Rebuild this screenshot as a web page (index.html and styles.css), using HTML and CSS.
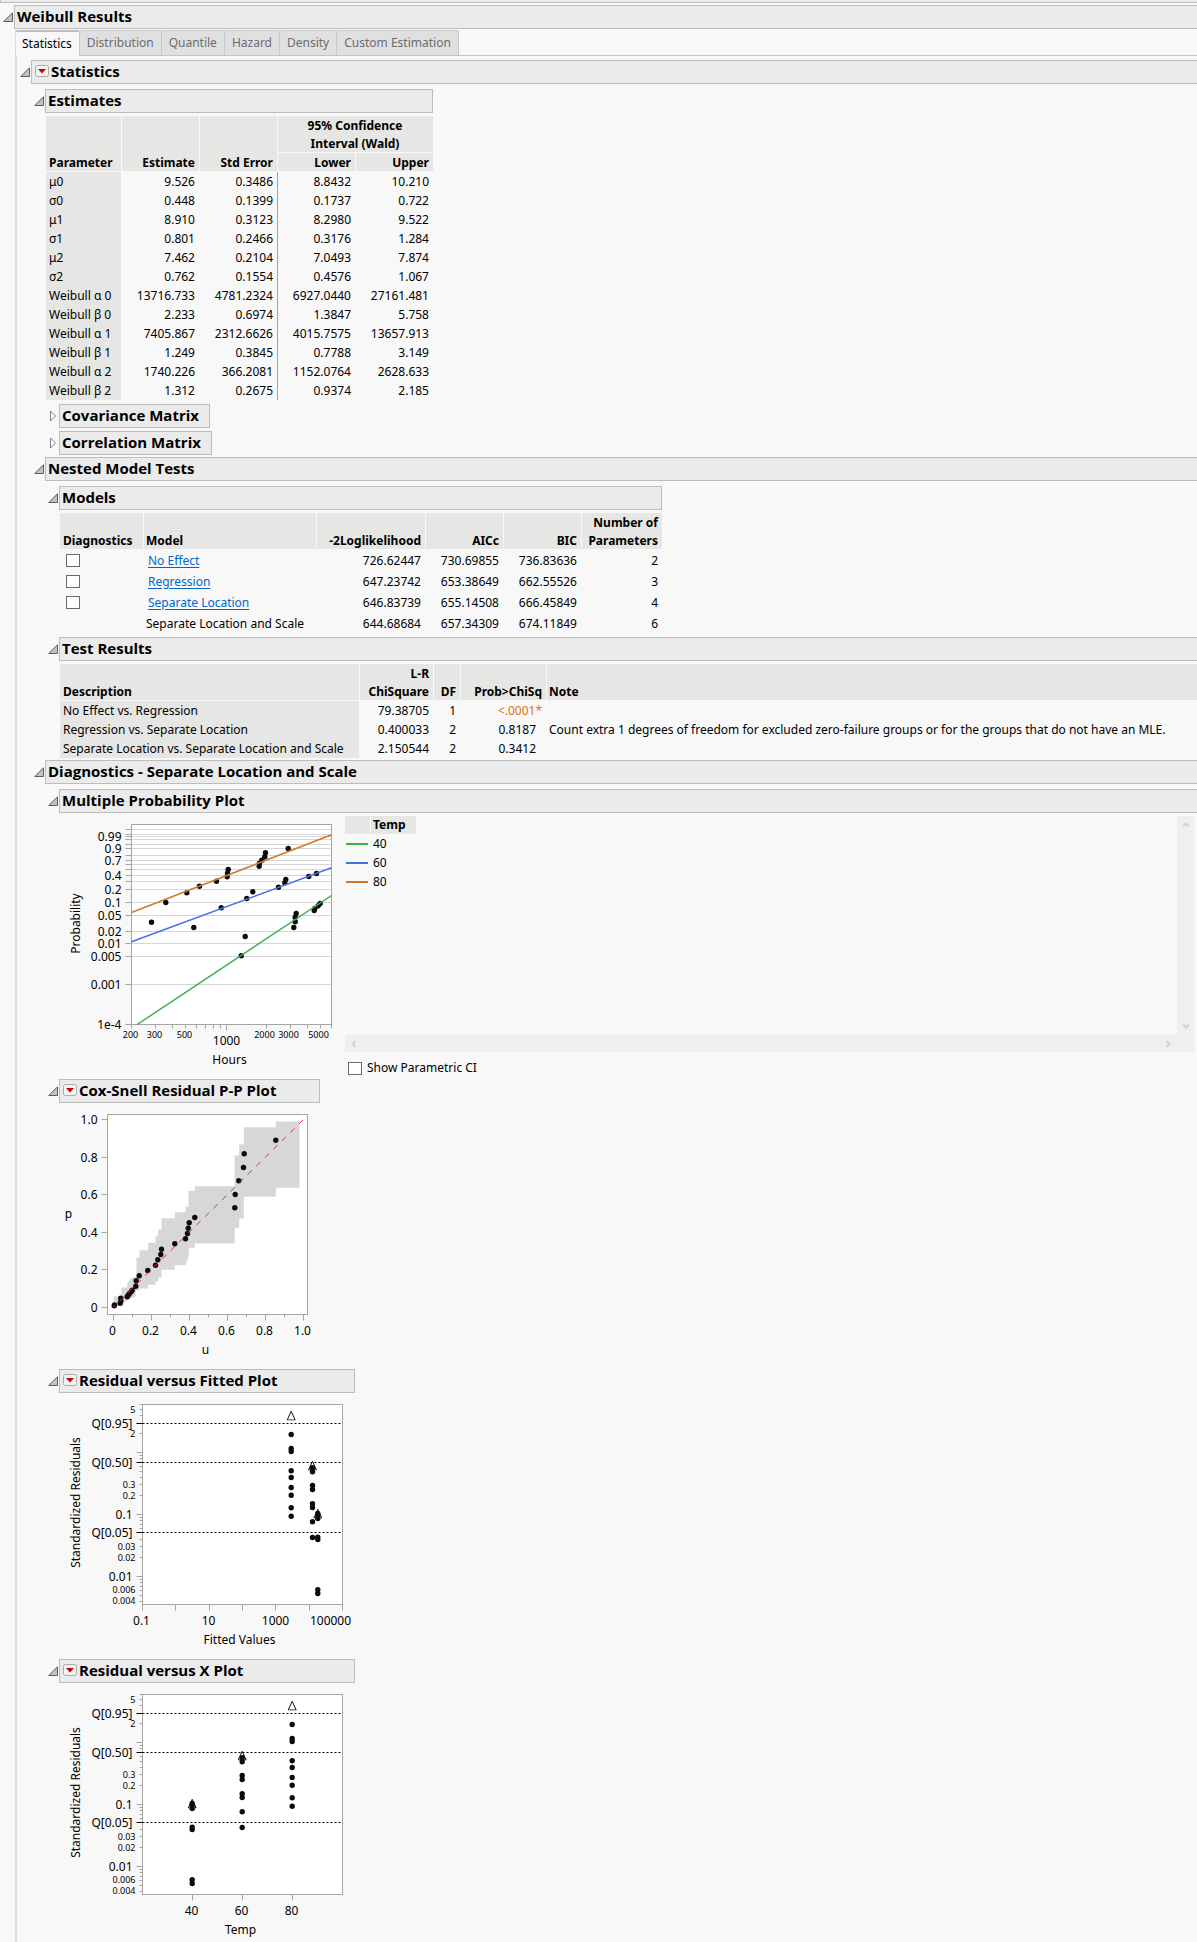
FILE: index.html
```html
<!DOCTYPE html>
<html lang="en">
<head>
<meta charset="utf-8">
<title>Weibull Results</title>
<link rel="stylesheet" href="styles.css">
</head>
<body>
<svg class="defs" aria-hidden="true">
  <defs>
    <symbol id="open" viewBox="0 0 10 10"><path d="M.8 9.5H9.5V.8Z" fill="#c2c2c2" stroke="#5c5c5c"/></symbol>
    <symbol id="closed" viewBox="0 0 10 12"><path d="M2.5 1V11L7.5 6Z" fill="#fff" stroke="#808080"/></symbol>
    <symbol id="menu" viewBox="0 0 14 12"><rect x=".5" y=".5" width="13" height="11" rx="2" fill="#f3f3f3" stroke="#ababab"/><path d="M3 4H11L7 8.5Z" fill="#cc0000"/></symbol>
    <symbol id="triangle" viewBox="0 0 10 10"><path d="M5 .8L9 9.5H1Z" fill="none" stroke="#111"/></symbol>
    <g id="residual-axis">
      <path class="axis" d="M-6 48H0M-6 110H0M-6 172H0M-3 0H0M-3 5H0M-3 11H0M-3 29H0M-3 51H0M-3 54H0M-3 62H0M-3 67H0M-3 73H0M-3 80H0M-3 91H0M-3 113H0M-3 116H0M-3 120H0M-3 124H0M-3 135H0M-3 142H0M-3 153H0M-3 175H0M-3 178H0M-3 182H0M-3 186H0M-3 191H0M-3 197H0"/>
      <rect class="frame" width="200" height="200"/>
      <path class="quantile-tick" d="M-6 19H0M-6 58H0M-6 128H0"/>
      <path class="quantile" d="M0 19H198M0 58H198M0 128H198"/>
      <g class="end small">
        <text x="-7" y="8">5</text><text x="-7" y="32">2</text><text x="-7" y="83">0.3</text><text x="-7" y="94">0.2</text><text x="-7" y="145">0.03</text><text x="-7" y="156">0.02</text><text x="-7" y="188">0.006</text><text x="-7" y="199">0.004</text>
      </g>
      <g class="end">
        <text x="-10" y="23">Q[0.95]</text><text x="-10" y="62">Q[0.50]</text><text x="-10" y="114">0.1</text><text x="-10" y="132">Q[0.05]</text><text x="-10" y="176">0.01</text>
      </g>
      <text class="mid" transform="translate(-63 98) rotate(-90)">Standardized Residuals</text>
    </g>
  </defs>
</svg>
<div class="previous"></div>
<main class="section">
  <div class="head"><button class="toggle" aria-label="Collapse"><svg width="10" height="10"><use href="#open"/></svg></button><h1 class="bar">Weibull Results</h1></div>
  <div class="panel">
    <div class="tabs" role="tablist">
      <button class="tab active" role="tab" aria-selected="true">Statistics</button><button class="tab" role="tab">Distribution</button><button class="tab" role="tab">Quantile</button><button class="tab" role="tab">Hazard</button><button class="tab" role="tab">Density</button><button class="tab" role="tab">Custom Estimation</button>
    </div>
    <section class="tabpanel">
      <div class="head"><button class="toggle" aria-label="Collapse"><svg width="10" height="10"><use href="#open"/></svg></button><h2 class="bar"><button class="menu" aria-label="Options"><svg width="14" height="12"><use href="#menu"/></svg></button>Statistics</h2></div>
      <div class="nest">
        <section class="fit">
          <div class="head"><button class="toggle" aria-label="Collapse"><svg width="10" height="10"><use href="#open"/></svg></button><h3 class="bar closed-end">Estimates</h3></div>
          <table class="data estimates">
            <colgroup><col class="w76"><col class="w78"><col class="w78"><col class="w78"><col class="w77"></colgroup>
            <thead>
              <tr><th class="left" rowspan="2">Parameter</th><th rowspan="2">Estimate</th><th rowspan="2">Std Error</th><th class="center" colspan="2">95% Confidence<br>Interval (Wald)</th></tr>
              <tr><th>Lower</th><th>Upper</th></tr>
            </thead>
            <tbody>
              <tr><th>μ0</th><td>9.526</td><td>0.3486</td><td>8.8432</td><td>10.210</td></tr>
              <tr><th>σ0</th><td>0.448</td><td>0.1399</td><td>0.1737</td><td>0.722</td></tr>
              <tr><th>μ1</th><td>8.910</td><td>0.3123</td><td>8.2980</td><td>9.522</td></tr>
              <tr><th>σ1</th><td>0.801</td><td>0.2466</td><td>0.3176</td><td>1.284</td></tr>
              <tr><th>μ2</th><td>7.462</td><td>0.2104</td><td>7.0493</td><td>7.874</td></tr>
              <tr><th>σ2</th><td>0.762</td><td>0.1554</td><td>0.4576</td><td>1.067</td></tr>
              <tr><th>Weibull α 0</th><td>13716.733</td><td>4781.2324</td><td>6927.0440</td><td>27161.481</td></tr>
              <tr><th>Weibull β 0</th><td>2.233</td><td>0.6974</td><td>1.3847</td><td>5.758</td></tr>
              <tr><th>Weibull α 1</th><td>7405.867</td><td>2312.6626</td><td>4015.7575</td><td>13657.913</td></tr>
              <tr><th>Weibull β 1</th><td>1.249</td><td>0.3845</td><td>0.7788</td><td>3.149</td></tr>
              <tr><th>Weibull α 2</th><td>1740.226</td><td>366.2081</td><td>1152.0764</td><td>2628.633</td></tr>
              <tr><th>Weibull β 2</th><td>1.312</td><td>0.2675</td><td>0.9374</td><td>2.185</td></tr>
            </tbody>
          </table>
          <div class="nest collapsed">
            <div class="head fit"><button class="toggle" aria-label="Expand"><svg width="10" height="12"><use href="#closed"/></svg></button><h4 class="bar closed-end">Covariance Matrix</h4></div>
            <div class="head fit"><button class="toggle" aria-label="Expand"><svg width="10" height="12"><use href="#closed"/></svg></button><h4 class="bar closed-end">Correlation Matrix</h4></div>
          </div>
        </section>
        <section>
          <div class="head"><button class="toggle" aria-label="Collapse"><svg width="10" height="10"><use href="#open"/></svg></button><h3 class="bar">Nested Model Tests</h3></div>
          <div class="nest">
            <section class="fit">
              <div class="head"><button class="toggle" aria-label="Collapse"><svg width="10" height="10"><use href="#open"/></svg></button><h4 class="bar closed-end">Models</h4></div>
              <table class="data models">
                <colgroup><col class="w84"><col class="w173"><col class="w109"><col class="w78"><col class="w78"><col class="w80"></colgroup>
                <thead><tr><th class="left">Diagnostics</th><th class="left">Model</th><th>-2Loglikelihood</th><th>AICc</th><th>BIC</th><th>Number of<br>Parameters</th></tr></thead>
                <tbody>
                  <tr><td class="pick"><input type="checkbox" aria-label="No Effect diagnostics"></td><td class="left"><a href="#">No Effect</a></td><td>726.62447</td><td>730.69855</td><td>736.83636</td><td>2</td></tr>
                  <tr><td class="pick"><input type="checkbox" aria-label="Regression diagnostics"></td><td class="left"><a href="#">Regression</a></td><td>647.23742</td><td>653.38649</td><td>662.55526</td><td>3</td></tr>
                  <tr><td class="pick"><input type="checkbox" aria-label="Separate Location diagnostics"></td><td class="left"><a href="#">Separate Location</a></td><td>646.83739</td><td>655.14508</td><td>666.45849</td><td>4</td></tr>
                  <tr><td></td><td class="left">Separate Location and Scale</td><td>644.68684</td><td>657.34309</td><td>674.11849</td><td>6</td></tr>
                </tbody>
              </table>
            </section>
            <section>
              <div class="head"><button class="toggle" aria-label="Collapse"><svg width="10" height="10"><use href="#open"/></svg></button><h4 class="bar">Test Results</h4></div>
              <div class="wide">
              <table class="data tests">
                <colgroup><col class="w300"><col class="w74"><col class="w27"><col class="w86"><col></colgroup>
                <thead><tr><th class="left">Description</th><th>L-R<br>ChiSquare</th><th>DF</th><th>Prob&gt;ChiSq</th><th class="left">Note</th></tr></thead>
                <tbody>
                  <tr><th>No Effect vs. Regression</th><td>79.38705</td><td>1</td><td class="flag">&lt;.0001*</td><td></td></tr>
                  <tr><th>Regression vs. Separate Location</th><td>0.400033</td><td>2</td><td class="prob">0.8187</td><td class="left">Count extra 1 degrees of freedom for excluded zero-failure groups or for the groups that do not have an MLE.</td></tr>
                  <tr><th>Separate Location vs. Separate Location and Scale</th><td>2.150544</td><td>2</td><td class="prob">0.3412</td><td></td></tr>
                </tbody>
              </table>
              </div>
            </section>
          </div>
        </section>
        <section>
          <div class="head"><button class="toggle" aria-label="Collapse"><svg width="10" height="10"><use href="#open"/></svg></button><h3 class="bar">Diagnostics - Separate Location and Scale</h3></div>
          <div class="nest">
            <section>
              <div class="head"><button class="toggle" aria-label="Collapse"><svg width="10" height="10"><use href="#open"/></svg></button><h4 class="bar">Multiple Probability Plot</h4></div>
              <div class="probability">
                <svg class="plot" width="280" height="259" role="img" aria-label="Probability by Hours">
                  <g transform="translate(72.5 11.5)">
                    <rect class="frame" width="200" height="200"/>
                    <path class="grid" d="M0 5H200M0 10H200M0 12H200M0 15H200M0 20H200M0 24H200M0 31H200M0 36H200M0 40H200M0 45H200M0 51H200M0 57H200M0 65H200M0 78H200M0 91H200M0 107H200M0 119H200M0 132H200M0 160H200"/>
                    <path class="axis" d="M-6 5H0M-6 10H0M-6 12H0M-6 15H0M-6 20H0M-6 24H0M-6 31H0M-6 36H0M-6 40H0M-6 45H0M-6 51H0M-6 57H0M-6 65H0M-6 78H0M-6 91H0M-6 107H0M-6 119H0M-6 132H0M-6 160H0M-6 200H0M0 200v4M24 200v4M41 200v4M54 200v4M65 200v4M74 200v4M82 200v4M89 200v4M95 200v6M135 200v4M159 200v4M176 200v4M189 200v4M200 200v4M0 0V200H200V0"/>
                    <path class="dots" d="M20 97.7h0M34.3 78h0M55.3 68.3h0M68 61.7h0M85 56.7h0M95.7 52.3h0M96 48.7h0M96.7 45h0M127.7 41.7h0M128 38.7h0M130.3 35.7h0M133.3 32.3h0M134 28.3h0M156.7 24h0M62.3 103h0M89.7 83.3h0M115.3 74h0M121.3 67.3h0M147 62.7h0M153.3 58.3h0M154.3 55h0M177.3 52h0M185 49h0M109.7 131.3h0M113.7 112h0M162.3 103h0M163.7 97.3h0M163.7 92.7h0M164.7 89h0M182.7 86h0M183.3 84h0M186.7 81.3h0M188.7 79h0"/>
                    <path class="fitted orange" d="M0 88L200 10.3"/><path class="fitted blue" d="M0 117.3L200 43.3"/><path class="fitted green" d="M5.7 200L200 71"/>
                    <g class="end"><text x="-10" y="16">0.99</text><text x="-10" y="28">0.9</text><text x="-10" y="40">0.7</text><text x="-10" y="55">0.4</text><text x="-10" y="69">0.2</text><text x="-10" y="82">0.1</text><text x="-10" y="95">0.05</text><text x="-10" y="111">0.02</text><text x="-10" y="123">0.01</text><text x="-10" y="136">0.005</text><text x="-10" y="164">0.001</text><text x="-10" y="204">1e-4</text></g>
                    <g class="mid small"><text x="-1" y="213">200</text><text x="23" y="213">300</text><text x="53" y="213">500</text><text x="133" y="213">2000</text><text x="157" y="213">3000</text><text x="187" y="213">5000</text></g>
                    <g class="mid"><text x="95" y="220">1000</text><text x="98" y="239">Hours</text><text transform="translate(-52 99) rotate(-90)">Probability</text></g>
                  </g>
                </svg>
                <div class="side">
                  <div class="scroller">
                    <table class="legend">
                      <thead><tr><th></th><th>Temp</th></tr></thead>
                      <tbody>
                        <tr><td><span class="key key-green"></span></td><td>40</td></tr>
                        <tr><td><span class="key key-blue"></span></td><td>60</td></tr>
                        <tr><td><span class="key key-orange"></span></td><td>80</td></tr>
                      </tbody>
                    </table>
                    <div class="vbar"><svg width="8" height="5"><path d="M1 4.5L4 1.5L7 4.5"/></svg><svg width="8" height="5"><path d="M1 .5L4 3.5L7 .5"/></svg></div>
                    <div class="hbar"><svg width="5" height="8"><path d="M4.5 1L1.5 4L4.5 7"/></svg><svg width="5" height="8"><path d="M.5 1L3.5 4L.5 7"/></svg></div>
                  </div>
                  <label class="check"><input type="checkbox">Show Parametric CI</label>
                </div>
              </div>
            </section>
            <section>
              <div class="head cox"><button class="toggle" aria-label="Collapse"><svg width="10" height="10"><use href="#open"/></svg></button><h4 class="bar closed-end"><button class="menu" aria-label="Options"><svg width="14" height="12"><use href="#menu"/></svg></button>Cox-Snell Residual P-P Plot</h4></div>
              <svg class="plot" width="280" height="259" role="img" aria-label="p by u">
                <g transform="translate(48.5 11.5)">
                  <rect class="frame" width="200" height="200"/>
                  <path class="band" d="M6.3 193V181.7H14V173H19.7V169L24 163H29V143.3H32V135.7H40.7V128.3H48V121.7H50.7V115H54V103.7H67.3V97.7H78V92.3H81V76.3H87.3V71.7H127V41H131.7V29.7H136.3V12.7H168.3V7H192V73.3H168.3V82.3H136.3V104H131.7V113.3H127.3V129H87.3V133.3H81.3V140.7L79.7 146.3L78 150.7H67.3V155.3H54V163H50.7V167.3H48V170.3H40.7V174H32V176.3H28.3V181.7L19.7 185.7L14 190.7Z"/>
                  <path class="axis" d="M-6 5H0M-6 43H0M-6 80H0M-6 118H0M-6 155H0M-6 193H0M6 200v6M44 200v6M82 200v6M120 200v6M158 200v6M196 200v6M25 200v3M63 200v3M101 200v3M139 200v3M177 200v3"/>
                  <path class="dots" d="M6.7 191.3h0M7 190.5h0M12.7 188.7h0M13.3 186.3h0M13.3 183.7h0M19.7 182.3h0M20.7 180.7h0M22 179h0M23.7 177.3h0M24.7 175.7h0M28.3 171.7h0M28.7 166.3h0M31.7 161.3h0M40.3 156h0M48 150.7h0M50.3 145.3h0M53.3 140h0M54 134.7h0M67.3 129.3h0M78 124.3h0M80 119h0M80.7 113.7h0M81.7 108.3h0M87.3 103h0M127.3 93.3h0M127.7 80h0M131.3 66.3h0M136 53h0M136.7 39.3h0M168.3 25.7h0"/>
                  <path class="diagonal" d="M195.7 5.3L5.5 193"/>
                  <g class="end"><text x="-10" y="9">1.0</text><text x="-10" y="47">0.8</text><text x="-10" y="84">0.6</text><text x="-10" y="122">0.4</text><text x="-10" y="159">0.2</text><text x="-10" y="197">0</text></g>
                  <g class="mid"><text x="5" y="220">0</text><text x="43" y="220">0.2</text><text x="81" y="220">0.4</text><text x="119" y="220">0.6</text><text x="157" y="220">0.8</text><text x="195" y="220">1.0</text><text x="98" y="239">u</text><text x="-39" y="103">p</text></g>
                </g>
              </svg>
            </section>
            <section>
              <div class="head residual"><button class="toggle" aria-label="Collapse"><svg width="10" height="10"><use href="#open"/></svg></button><h4 class="bar closed-end"><button class="menu" aria-label="Options"><svg width="14" height="12"><use href="#menu"/></svg></button>Residual versus Fitted Plot</h4></div>
              <svg class="plot" width="300" height="259" role="img" aria-label="Standardized Residuals by Fitted Values">
                <g transform="translate(83.5 11.5)">
                  <use href="#residual-axis"/>
                  <path class="axis" d="M0 200v6M33 200v6M67 200v6M100 200v6M133 200v6M167 200v6M200 200v6"/>
                  <path class="dots" d="M148.7 30h0M148.7 44h0M148.7 45.3h0M148.7 47h0M148.7 66.3h0M148.7 73h0M148.7 83h0M148.7 90.7h0M148.7 103.3h0M148.7 111.7h0M170 63.3h0M170 67.3h0M170 81h0M170 85h0M170 99.3h0M170 103h0M170 117.3h0M170 133h0M175.3 109h0M175.3 111h0M175.3 114h0M175.3 132.7h0M175.3 135h0M175.3 185.3h0M175.3 189h0"/>
                  <use href="#triangle" x="143.7" y="6" width="10" height="10"/><use href="#triangle" x="165" y="56" width="10" height="10"/><use href="#triangle" x="170.3" y="104" width="10" height="10"/>
                  <g class="mid"><text x="-1" y="220">0.1</text><text x="66" y="220">10</text><text x="133" y="220">1000</text><text x="188" y="220">100000</text><text x="97" y="239">Fitted Values</text></g>
                </g>
              </svg>
            </section>
            <section>
              <div class="head residual"><button class="toggle" aria-label="Collapse"><svg width="10" height="10"><use href="#open"/></svg></button><h4 class="bar closed-end"><button class="menu" aria-label="Options"><svg width="14" height="12"><use href="#menu"/></svg></button>Residual versus X Plot</h4></div>
              <svg class="plot" width="300" height="259" role="img" aria-label="Standardized Residuals by Temp">
                <g transform="translate(83.5 11.5)">
                  <use href="#residual-axis"/>
                  <path class="axis" d="M50 200v6M100 200v6M150 200v6"/>
                  <path class="dots" d="M149.7 30h0M149.7 44h0M149.7 45.3h0M149.7 47h0M149.7 66.3h0M149.7 73h0M149.7 83h0M149.7 90.7h0M149.7 103.3h0M149.7 111.7h0M99.7 63.3h0M99.7 67.3h0M99.7 81h0M99.7 85h0M99.7 99.3h0M99.7 103h0M99.7 117.3h0M99.7 133h0M49.7 109h0M49.7 111h0M49.7 114h0M49.7 132.7h0M49.7 135h0M49.7 185.3h0M49.7 189h0"/>
                  <use href="#triangle" x="144.7" y="6" width="10" height="10"/><use href="#triangle" x="94.7" y="56" width="10" height="10"/><use href="#triangle" x="44.7" y="104" width="10" height="10"/>
                  <g class="mid"><text x="49" y="220">40</text><text x="99" y="220">60</text><text x="149" y="220">80</text><text x="98" y="239">Temp</text></g>
                </g>
              </svg>
            </section>
          </div>
        </section>
      </div>
    </section>
  </div>
</main>
</body>
</html>
```
FILE: styles.css
```css
* { box-sizing: border-box; }
body {
  margin: 0;
  background: #f8f8f8;
  color: #000;
  font: 12px/18px "Noto Sans", "Open Sans", sans-serif;
}
button { padding: 0; border: 0; background: none; font: inherit; color: inherit; }
.defs { display: block; width: 0; height: 0; }

/* lower edge of the outline above */
.previous { height: 3px; margin-bottom: 2px; background: #ebebeb; border: 1px solid #bdbdbd; border-width: 0 0 1px 1px; }

/* outline headings */
.head { display: flex; align-items: center; }
.toggle { flex: none; width: 14px; height: 12px; padding-left: 2px; display: flex; align-items: center; justify-content: center; }
.head > .toggle { margin-bottom: 1px; }
.bar {
  flex: 1;
  display: flex;
  align-items: center;
  height: 24px;
  margin: 0;
  padding: 0 0 2px 2px;
  background: #ebebeb;
  border: 1px solid #bdbdbd;
  border-right: 0;
  font: bold 15px/20px "Open Sans", "Noto Sans", sans-serif;
  white-space: nowrap;
}
.closed-end { border-right: 1px solid #bdbdbd; }
.menu { display: flex; margin: 0 2px 0 1px; }
.fit { width: fit-content; }
.nest { margin-left: 14px; padding-top: 5px; }
.collapsed { display: flex; flex-direction: column; gap: 3px; margin-bottom: 2px; padding-top: 1px; }
.collapsed .bar { padding-right: 10px; }
.cox { width: 275px; }
.residual { width: 310px; }

/* tabs */
.panel { margin: 1px 0 0 15px; }
.tabs { display: flex; height: 26px; padding-left: 1px; box-shadow: inset 0 -1px #c4c4c4, inset 2px 0 #dadada; }
.tab {
  height: 25px;
  padding: 0 7px;
  background: #e0e0e0;
  border: 1px solid #c8c8c8;
  border-bottom: 0;
  border-left: 0;
  border-radius: 2px 2px 0 0;
  color: #6c6c6c;
}
.tab.active { height: 26px; padding: 0 7px 0 6px; background: #f8f8f8; border-top: 2px solid #bdbdbd; color: #000; }
.tabpanel { padding-top: 4px; border-left: 2px solid #dadada; }

/* tables */
.data { table-layout: fixed; border-spacing: 0; margin: 3px 0 3px 15px; }
.data th, .data td { height: 19px; padding: 0 4px 0 3px; border-right: 1px solid #f8f8f8; text-align: right; white-space: nowrap; }
.data tr > :last-child { border-right: 0; }
.data thead th { padding-top: 1px; vertical-align: bottom; background: #e6e6e4; background-clip: padding-box; box-shadow: inset 0 -1px #f8f8f8; }
.data tbody th { background: #e6e6e4; background-clip: padding-box; text-align: left; font-weight: normal; }
.data .left { text-align: left; }
.data .left:not(:first-child) { padding-left: 2px; }
.data .center { text-align: center; }
.estimates { width: 387px; }
.estimates td:nth-child(3) { border-right: 1px solid #a3a397; }
.models { width: 602px; }
.models tbody td { height: 21px; }
.models .pick { padding: 0 0 0 6px; text-align: left; }
.models a { margin-left: 2px; color: #0066cc; text-underline-offset: 2px; }
.wide { margin-left: 15px; }
.tests { width: 100%; margin: 3px 0 2px; }
.tests .prob { padding-right: 10px; }
.tests .flag { color: #e07010; }
.w27 { width: 27px; }
.w74 { width: 74px; }
.w76 { width: 76px; }
.w77 { width: 77px; }
.w78 { width: 78px; }
.w80 { width: 80px; }
.w84 { width: 84px; }
.w86 { width: 86px; }
.w109 { width: 109px; }
.w173 { width: 173px; }
.w300 { width: 300px; }

input[type="checkbox"] {
  appearance: none;
  display: block;
  width: 14px;
  height: 13px;
  margin: 0;
  background: #fff;
  border: 1px solid #6a6a6a;
}

/* probability plot with its legend pane */
.probability { display: flex; gap: 6px; padding-right: 3px; }
.probability .plot { flex: none; margin-bottom: 0; }
.side { flex: 1; padding: 3px 0 2px; }
.scroller { display: grid; grid-template: 219px 17px / 1fr 17px; }
.legend { justify-self: start; align-self: start; border-spacing: 0; }
.legend th { height: 18px; padding: 0 10px 0 2px; background: #e6e6e4; background-clip: padding-box; }
.legend th:first-child { width: 26px; padding: 0; border-right: 1px solid #f8f8f8; }
.legend td { height: 19px; padding: 0 2px; }
.legend td:first-child { padding: 0 1px; }
.key { display: block; width: 22px; height: 2px; }
.key-green { background: #3cb04a; }
.key-blue { background: #4472e0; }
.key-orange { background: #cc7a29; }
.vbar, .hbar { display: flex; align-items: center; justify-content: space-between; background: #efefef; }
.vbar { grid-row: 1 / 3; grid-column: 2; flex-direction: column; padding: 6px 0 23px; }
.hbar { grid-row: 2; grid-column: 1; padding: 0 6px; }
.vbar path, .hbar path { fill: none; stroke: #d2d2d2; stroke-width: 2; }
.check { display: flex; align-items: center; gap: 5px; width: fit-content; margin: 7px 0 0 3px; height: 18px; }

/* plots */
.plot { display: block; margin: 0 0 7px 14px; overflow: visible; }
section:last-child > .plot { margin-bottom: 0; }
.plot text { font-size: 12px; fill: #000; }
.frame { fill: #fff; stroke: #a6a6a6; }
.grid { stroke: #d6d6d6; }
.axis { fill: none; stroke: #a6a6a6; }
.dots { fill: none; stroke: #0a0a0a; stroke-width: 5.4; stroke-linecap: round; }
.band { fill: #d7d7d7; }
.diagonal { stroke: #e0304a; stroke-dasharray: 6 6; }
.quantile { stroke: #000; stroke-dasharray: 2 2; }
.quantile-tick { stroke: #000; }
.fitted { stroke-width: 1.5; }
.orange { stroke: #cc7a29; }
.blue { stroke: #4472e0; }
.green { stroke: #3cb04a; }
.end { text-anchor: end; }
.mid { text-anchor: middle; }
.plot .small text { font-size: 9px; }
#residual-axis text { font-size: 12px; }
#residual-axis .small text { font-size: 9px; }
```
